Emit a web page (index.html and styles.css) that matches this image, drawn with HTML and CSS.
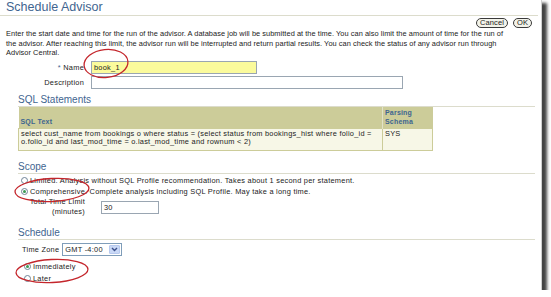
FILE: index.html
```html
<!DOCTYPE html>
<html>
<head>
<meta charset="utf-8">
<link rel="stylesheet" href="styles.css">
</head>
<body>
<div class="page">
  <h1 class="title">Schedule Advisor</h1>
  <div class="actions">
    <span class="pill">Cancel</span>
    <span class="pill">OK</span>
  </div>
  <p class="intro">Enter the start date and time for the run of the advisor. A database job will be submitted at the time. You can also limit the amount of time for the run of<br>the advisor. After reaching this limit, the advisor run will be interrupted and return partial results. You can check the status of any advisor run through<br>Advisor Central.</p>

  <div class="row first">
    <span class="lbl"><span class="req">*</span> Name</span>
    <span class="field name">book_1</span>
  </div>
  <div class="row">
    <span class="lbl">Description</span>
    <span class="field desc"></span>
  </div>

  <h2 class="sec-title">SQL Statements</h2>
  <table class="sql">
    <tr>
      <th class="c1">SQL Text</th>
      <th class="c2">Parsing<br>Schema</th>
    </tr>
    <tr>
      <td class="c1">select cust_name from bookings o where status = (select status from bookings_hist where folio_id =<br>o.folio_id and last_mod_time = o.last_mod_time and rownum &lt; 2)</td>
      <td class="c2">SYS</td>
    </tr>
  </table>

  <h2 class="sec-title scope">Scope</h2>
  <div class="opt first"><span class="radio"></span>Limited. Analysis without SQL Profile recommendation. Takes about 1 second per statement.</div>
  <div class="opt"><span class="radio on"></span>Comprehensive. Complete analysis including SQL Profile. May take a long time.</div>
  <div class="row total">
    <span class="lbl">Total Time Limit<br>(minutes)</span>
    <span class="field mins">30</span>
  </div>

  <h2 class="sec-title sched">Schedule</h2>
  <div class="tz">
    <span>Time Zone</span>
    <span class="select">GMT -4:00<span class="arrow"><svg width="7" height="5" viewBox="0 0 7 5"><path d="M1 1 L3.5 3.5 L6 1" fill="none" stroke="#3a4f8a" stroke-width="1.4"/></svg></span></span>
  </div>
  <div class="opt sch first"><span class="radio on"></span>Immediately</div>
  <div class="opt sch"><span class="radio"></span>Later</div>

  <svg class="marks" width="541" height="290" viewBox="0 0 541 290">
    <ellipse cx="106" cy="63.5" rx="22" ry="14" transform="rotate(-6 106 63.5)"/>
    <ellipse cx="52" cy="190" rx="37" ry="11.5" transform="rotate(-3 52 190)"/>
    <ellipse cx="52" cy="271" rx="36" ry="11.5" transform="rotate(-3 52 271)"/>
  </svg>
</div>
</body>
</html>
```
FILE: styles.css
```css
html, body {
  margin: 0;
  background: #fff;
}
body {
  font-family: "Liberation Sans", Arial, sans-serif;
  font-size: 7.4px;
  letter-spacing: 0.25px;
  color: #222;
}
.page {
  position: relative;
  width: 541px;
  height: 290px;
  background: #fff;
  border-right: 1px solid #cfcfcf;
  box-shadow: 4px 4px 3px 1px #444;
  overflow: hidden;
}
.title {
  margin: 0 3px 0 0;
  padding-left: 6px;
  font-weight: normal;
  font-size: 12.5px;
  letter-spacing: 0;
  line-height: 15px;
  color: #3f6590;
  border-bottom: 1px solid #dcdccc;
}
.actions {
  display: flex;
  justify-content: flex-end;
  gap: 5px;
  padding-right: 9px;
  margin-top: 2px;
  height: 10px;
}
.pill {
  height: 10px;
  box-sizing: border-box;
  border: 1px solid #3a3a3a;
  border-radius: 5px;
  padding: 0 3px;
  font-size: 7.5px;
  letter-spacing: 0.1px;
  line-height: 8px;
  background: #f3f3ea;
  color: #222;
}
.intro {
  margin: 1px 0 0;
  padding: 0 5px 0 6px;
  line-height: 9.6px;
  letter-spacing: 0.05px;
}
.row {
  display: flex;
  align-items: center;
  margin-top: 2px;
}
.row.first {
  margin-top: 3px;
}
.lbl {
  width: 84px;
  text-align: right;
  margin-right: 7px;
}
.req {
  color: #3f6590;
}
.field {
  display: block;
  height: 13px;
  box-sizing: border-box;
  border: 1px solid #9aa6b2;
  background: #fff;
  padding: 0 2px;
  line-height: 11px;
}
.field.name {
  width: 166px;
  background: #fbfb9c;
}
.field.desc {
  width: 312px;
}
.sec-title {
  margin: 5px 6px 0 18px;
  font-size: 10px;
  font-weight: normal;
  letter-spacing: 0;
  line-height: 12px;
  color: #3f6590;
  border-bottom: 1px solid #dcdccc;
}
.sec-title.scope {
  margin-top: 10px;
}
.sec-title.sched {
  margin-top: 9px;
}
.sql {
  margin-left: 18px;
  width: 415px;
  border-collapse: collapse;
}
.sql th {
  background: #cccc99;
  color: #3d6590;
  font-weight: bold;
  font-size: 7px;
  letter-spacing: 0.2px;
  text-align: left;
  vertical-align: bottom;
  padding: 1px 2px;
  line-height: 9.5px;
  height: 19px;
}
.sql th.c2 {
  border-left: 1px solid #e2e2c8;
}
.sql td {
  background: #f7f7e7;
  border: 1px solid #cccc99;
  vertical-align: top;
  padding: 1px 2px;
  line-height: 8.5px;
  height: 19px;
}
.sql .c1 {
  width: 359px;
}
.opt {
  display: flex;
  align-items: center;
  height: 11px;
  padding-left: 21px;
}
.opt.first {
  margin-top: 1px;
}
.opt.sch {
  height: 12px;
  padding-left: 24px;
}
.opt.sch.first {
  margin-top: 5px;
}
.radio {
  position: relative;
  flex: none;
  width: 7px;
  height: 7px;
  box-sizing: border-box;
  border: 1px solid #6f8396;
  border-radius: 50%;
  background: #fff;
  margin-right: 2px;
}
.radio.on::after {
  content: "";
  position: absolute;
  left: 1px;
  top: 1px;
  width: 3px;
  height: 3px;
  border-radius: 50%;
  background: #3b9a54;
}
.row.total {
  margin-top: 0;
}
.row.total .lbl {
  width: 85px;
  margin-right: 16px;
  line-height: 10.5px;
}
.field.mins {
  width: 58px;
}
.tz {
  display: flex;
  align-items: center;
  gap: 3px;
  padding-left: 22px;
  margin-top: 3px;
}
.select {
  display: flex;
  align-items: center;
  justify-content: space-between;
  width: 60px;
  height: 13px;
  box-sizing: border-box;
  border: 1px solid #7f9db9;
  padding: 0 1px 0 2px;
  background: #fff;
}
.arrow {
  display: flex;
  align-items: center;
  justify-content: center;
  width: 11px;
  height: 9px;
  box-sizing: border-box;
  border: 1px solid #b7c9ee;
  border-radius: 1px;
  background: #c9d8f6;
}
.marks {
  position: absolute;
  left: 0;
  top: 0;
  pointer-events: none;
}
.marks ellipse {
  fill: none;
  stroke: #c4262c;
  stroke-width: 1.3;
}
```
